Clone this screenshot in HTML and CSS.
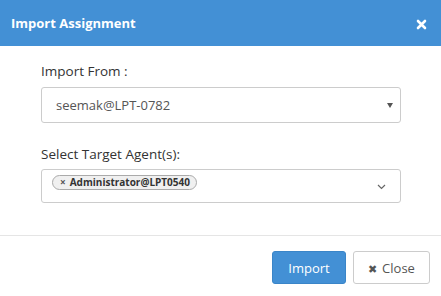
FILE: index.html
```html
<!DOCTYPE html>
<html lang="en">
<head>
    <meta charset="UTF-8">
    <title>Import Assignment</title>
    <link rel="stylesheet" href="styles.css">
</head>
<body>
    <div class="modal">
        <div class="modal-header">
            <span class="modal-title">Import Assignment</span>
            <span class="modal-close">
                <svg width="11" height="11" viewBox="0 0 11 11"><path d="M2 2L9 9M9 2L2 9" stroke="#fff" stroke-width="2.6" stroke-linecap="round"/></svg>
            </span>
        </div>
        <div class="modal-body">
            <label class="field-label">Import From :</label>
            <div class="select-box">
                <span>seemak@LPT-0782</span>
                <span class="caret"></span>
            </div>
            <label class="field-label second">Select Target Agent(s):</label>
            <div class="multi-box">
                <span class="chip"><span class="chip-x">×</span>Administrator@LPT0540</span>
                <svg class="chevron" width="9" height="6" viewBox="0 0 9 6"><path d="M1 1L4.5 4.5L8 1" fill="none" stroke="#666" stroke-width="1.2"/></svg>
            </div>
        </div>
        <div class="modal-footer">
            <button class="btn btn-primary">Import</button>
            <button class="btn btn-default"><span class="btn-icon">✖</span>Close</button>
        </div>
    </div>
</body>
</html>
```

FILE: styles.css
```css
body {
    margin: 0;
    font-family: "Open Sans", "Noto Sans", sans-serif;
    background-color: white;
    color: #333;
}
.modal {
    width: 441px;
    height: 296px;
}
.modal-header {
    height: 46px;
    background-color: #4390d5;
    display: flex;
    align-items: center;
    justify-content: space-between;
    padding: 0 14px 0 11px;
}
.modal-title {
    color: white;
    font-weight: bold;
    font-size: 13px;
    font-family: "Open Sans", sans-serif;
}
.modal-close {
    display: flex;
    margin-top: 2px;
}
.modal-body {
    padding: 16px 40px 32px 41px;
    border-bottom: 1px solid #e5e5e5;
}
.field-label {
    display: block;
    font-size: 13.5px;
    color: #333;
    margin-bottom: 7px;
}
.field-label.second {
    margin-top: 22px;
    margin-bottom: 6px;
}
.select-box {
    height: 34px;
    border: 1px solid #ccc;
    border-radius: 3px;
    display: flex;
    align-items: center;
    justify-content: space-between;
    padding: 0 7px 0 14px;
    font-size: 13px;
    color: #555;
}
.caret {
    width: 0;
    height: 0;
    border-left: 3px solid transparent;
    border-right: 3px solid transparent;
    border-top: 5px solid #555;
}
.multi-box {
    height: 32px;
    border: 1px solid #ccc;
    border-radius: 3px;
    display: flex;
    align-items: center;
    justify-content: space-between;
    padding: 0 14px 0 10px;
}
.chip {
    display: flex;
    align-items: center;
    height: 13px;
    margin-top: -8px;
    padding: 0 6px 0 7px;
    border: 1px solid #aaa;
    border-radius: 8px;
    background-color: #f0f0f0;
    font-size: 10px;
    font-weight: bold;
    color: #333;
}
.chip-x {
    margin-right: 4px;
    color: #555;
}
.chevron {
    margin-top: 1px;
}
.modal-footer {
    display: flex;
    justify-content: flex-end;
    gap: 7px;
    padding: 15px 11px 0 0;
}
.btn {
    height: 33px;
    font-family: "Open Sans", sans-serif;
    font-size: 13px;
    border-radius: 3px;
    cursor: pointer;
}
.btn-primary {
    width: 74px;
    border: 1px solid #3a85c8;
    background-color: #4390d5;
    color: white;
}
.btn-default {
    width: 77px;
    border: 1px solid #ccc;
    background-color: white;
    color: #555;
}
.btn-icon {
    font-size: 11px;
    margin-right: 5px;
    color: #555;
}
```
